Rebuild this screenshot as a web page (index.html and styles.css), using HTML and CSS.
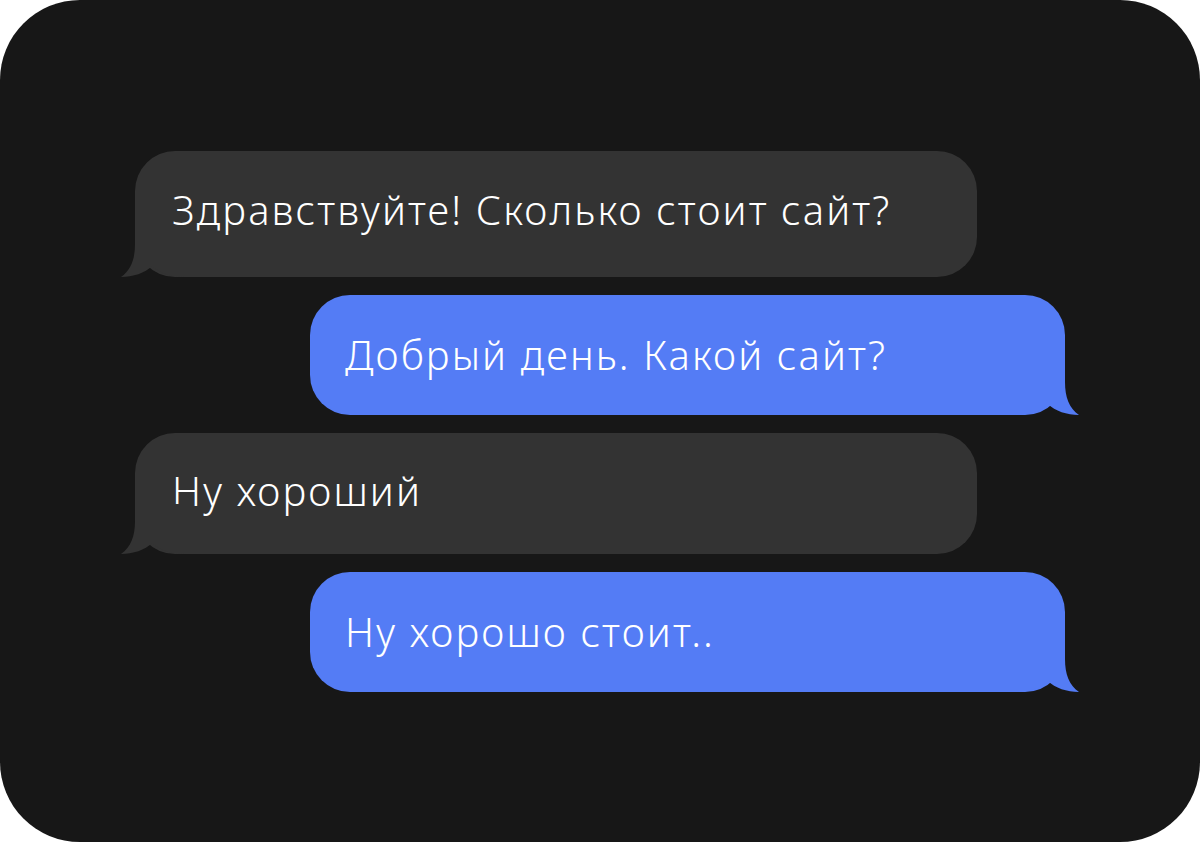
FILE: index.html
```html
<!DOCTYPE html>
<html lang="ru">

<head>
  <meta charset="UTF-8">
  <meta name="viewport" content="width=device-width, initial-scale=1.0">
  <title>Чат</title>
  <link rel="stylesheet" href="styles.css">
</head>

<body>
  <div class="screen">
    <div class="chat">
      <div class="bubble incoming">
        Здравствуйте! Сколько стоит сайт?
        <svg class="tail" width="70" height="50" viewBox="0 0 70 50"><path d="M14,0 L14,17 C14,32 10,43 0,50 C12,50 24,46 31,39 C40,47 50,50 64,50 L70,50 L70,0 Z"/></svg>
      </div>
      <div class="bubble outgoing">
        Добрый день. Какой сайт?
        <svg class="tail" width="70" height="50" viewBox="0 0 70 50"><path d="M14,0 L14,17 C14,32 10,43 0,50 C12,50 24,46 31,39 C40,47 50,50 64,50 L70,50 L70,0 Z"/></svg>
      </div>
      <div class="bubble incoming">
        Ну хороший
        <svg class="tail" width="70" height="50" viewBox="0 0 70 50"><path d="M14,0 L14,17 C14,32 10,43 0,50 C12,50 24,46 31,39 C40,47 50,50 64,50 L70,50 L70,0 Z"/></svg>
      </div>
      <div class="bubble outgoing">
        Ну хорошо стоит..
        <svg class="tail" width="70" height="50" viewBox="0 0 70 50"><path d="M14,0 L14,17 C14,32 10,43 0,50 C12,50 24,46 31,39 C40,47 50,50 64,50 L70,50 L70,0 Z"/></svg>
      </div>
    </div>
  </div>
</body>

</html>
```

FILE: styles.css
```css
body {
  margin: 0;
  padding: 0;
  background-color: #ffffff;
  font-family: "Noto Sans", "Open Sans", sans-serif;
}

.screen {
  width: 1200px;
  height: 842px;
  box-sizing: border-box;
  background-color: #171717;
  border-radius: 80px;
  padding-top: 151px;
}

.chat {
  display: flex;
  flex-direction: column;
  gap: 18px;
  margin-left: 135px;
}

.bubble {
  position: relative;
  display: flex;
  align-items: center;
  box-sizing: border-box;
  border-radius: 40px;
  padding: 0 36px 6px 37px;
  color: #ffffff;
  font-size: 40px;
  font-weight: 300;
  letter-spacing: 2.1px;
}

.incoming {
  width: 842px;
  background-color: #333333;
}

.incoming:first-child {
  height: 126px;
  padding-bottom: 10px;
}

.incoming + .outgoing + .incoming {
  height: 121px;
}

.outgoing {
  width: 755px;
  height: 120px;
  margin-left: 175px;
  background-color: #547cf5;
  padding-left: 35px;
  padding-bottom: 2px;
}

.tail {
  position: absolute;
  bottom: 0;
}

.incoming .tail {
  left: -14px;
  fill: #333333;
}

.outgoing .tail {
  right: -14px;
  fill: #547cf5;
  transform: scaleX(-1);
}
```
